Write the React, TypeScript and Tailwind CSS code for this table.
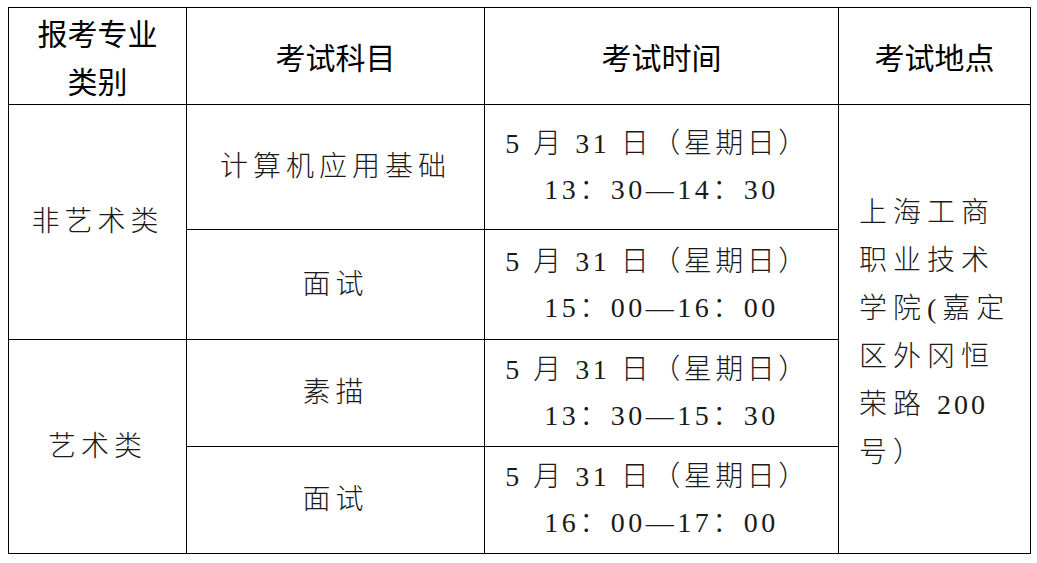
const head = "font-['Noto_Sans_CJK_SC',sans-serif] text-[30px] text-black";
const body = "font-['Liberation_Serif','Noto_Sans_CJK_SC',serif] font-light text-[28px] text-[#1a1a1a]";
const cell = "border border-black p-0 text-center align-middle";

function TimeCell({ time }: { time: string }) {
  return (
    <td className={`${cell} ${body} tracking-[3.5px] leading-[46px]`}>
      <div className="pr-[8px]">5 月 31 日（星期日）</div>
      <div>{time}</div>
    </td>
  );
}

export default function App() {
  return (
    <div className="min-h-[563px] bg-white pl-[8px] pt-[7px]">
      <table className="w-[1022px] table-fixed border-collapse">
        <colgroup>
          <col className="w-[178px]" />
          <col className="w-[298px]" />
          <col className="w-[354px]" />
          <col className="w-[192px]" />
        </colgroup>
        <tbody>
          <tr className="h-[97px]">
            <td className={`${cell} ${head} leading-[48px]`}>
              报考专业
              <br />
              类别
            </td>
            <td className={`${cell} ${head}`}>考试科目</td>
            <td className={`${cell} ${head}`}>考试时间</td>
            <td className={`${cell} ${head}`}>考试地点</td>
          </tr>
          <tr className="h-[125px]">
            <td rowSpan={2} className={`${cell} ${body} tracking-[5px]`}>
              非艺术类
            </td>
            <td className={`${cell} ${body} tracking-[5px]`}>计算机应用基础</td>
            <TimeCell time="13：30—14：30" />
            <td
              rowSpan={4}
              className={`${cell} ${body} pl-[20px] pt-[8px] text-left tracking-[6px] leading-[48px]`}
            >
              <div>上海工商</div>
              <div>职业技术</div>
              <div>学院(嘉定</div>
              <div>区外冈恒</div>
              <div>
                荣路<span className="tracking-[3px]"> 200</span>
              </div>
              <div>号）</div>
            </td>
          </tr>
          <tr className="h-[110px]">
            <td className={`${cell} ${body} tracking-[5px]`}>面试</td>
            <TimeCell time="15：00—16：00" />
          </tr>
          <tr className="h-[107px]">
            <td rowSpan={2} className={`${cell} ${body} tracking-[5px]`}>
              艺术类
            </td>
            <td className={`${cell} ${body} tracking-[5px]`}>素描</td>
            <TimeCell time="13：30—15：30" />
          </tr>
          <tr className="h-[107px]">
            <td className={`${cell} ${body} tracking-[5px]`}>面试</td>
            <TimeCell time="16：00—17：00" />
          </tr>
        </tbody>
      </table>
    </div>
  );
}
